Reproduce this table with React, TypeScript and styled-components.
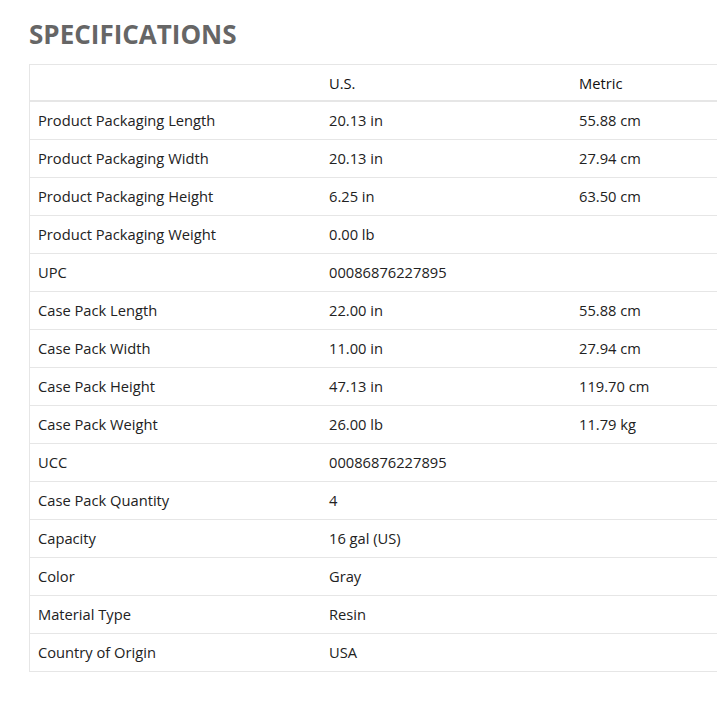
import React from 'react';
import styled, { createGlobalStyle } from 'styled-components';

const GlobalStyle = createGlobalStyle`
    html, body {
        margin: 0;
        padding: 0;
        background: #fff;
    }
    body {
        font-family: "Open Sans", "Liberation Sans", sans-serif;
        color: #222;
    }
`;

const Section = styled.section`
    padding: 18px 0 0 29px;
`;

const Title = styled.h2`
    margin: 0 0 14px;
    font-size: 26px;
    line-height: 32px;
    font-weight: 700;
    color: #666;
`;

// the table runs off the right edge in the source, so no right border
const Table = styled.table`
    border-collapse: collapse;
    width: 688px;
    border: 1px solid #e6e6e6;
    border-right: none;
    table-layout: fixed;
    font-size: 14.7px;
`;

const HeadCell = styled.th<{ $width?: number }>`
    width: ${(p) => (p.$width ? `${p.$width}px` : 'auto')};
    height: 35px;
    padding: 0 8px;
    text-align: left;
    font-weight: 400;
    color: #111;
    border-bottom: 2px solid #e6e6e6;
`;

const Row = styled.tr`
    height: 38px;
    border-bottom: 1px solid #e6e6e6;
`;

const Cell = styled.td`
    padding: 0 8px;
    color: #222;
    white-space: nowrap;
`;

type Spec = { label: string; us: string; metric?: string };

const specs: Spec[] = [
    { label: 'Product Packaging Length', us: '20.13 in', metric: '55.88 cm' },
    { label: 'Product Packaging Width', us: '20.13 in', metric: '27.94 cm' },
    { label: 'Product Packaging Height', us: '6.25 in', metric: '63.50 cm' },
    { label: 'Product Packaging Weight', us: '0.00 lb' },
    { label: 'UPC', us: '00086876227895' },
    { label: 'Case Pack Length', us: '22.00 in', metric: '55.88 cm' },
    { label: 'Case Pack Width', us: '11.00 in', metric: '27.94 cm' },
    { label: 'Case Pack Height', us: '47.13 in', metric: '119.70 cm' },
    { label: 'Case Pack Weight', us: '26.00 lb', metric: '11.79 kg' },
    { label: 'UCC', us: '00086876227895' },
    { label: 'Case Pack Quantity', us: '4' },
    { label: 'Capacity', us: '16 gal (US)' },
    { label: 'Color', us: 'Gray' },
    { label: 'Material Type', us: 'Resin' },
    { label: 'Country of Origin', us: 'USA' },
];

const App: React.FC = () => {
    return (
        <>
            <GlobalStyle />
            <Section>
                <Title>SPECIFICATIONS</Title>
                <Table>
                    <thead>
                        <tr>
                            <HeadCell $width={275} />
                            <HeadCell $width={234}>U.S.</HeadCell>
                            <HeadCell>Metric</HeadCell>
                        </tr>
                    </thead>
                    <tbody>
                        {specs.map((s) => (
                            <Row key={s.label}>
                                <Cell>{s.label}</Cell>
                                <Cell>{s.us}</Cell>
                                <Cell>{s.metric ?? ''}</Cell>
                            </Row>
                        ))}
                    </tbody>
                </Table>
            </Section>
        </>
    );
};

export default App;
